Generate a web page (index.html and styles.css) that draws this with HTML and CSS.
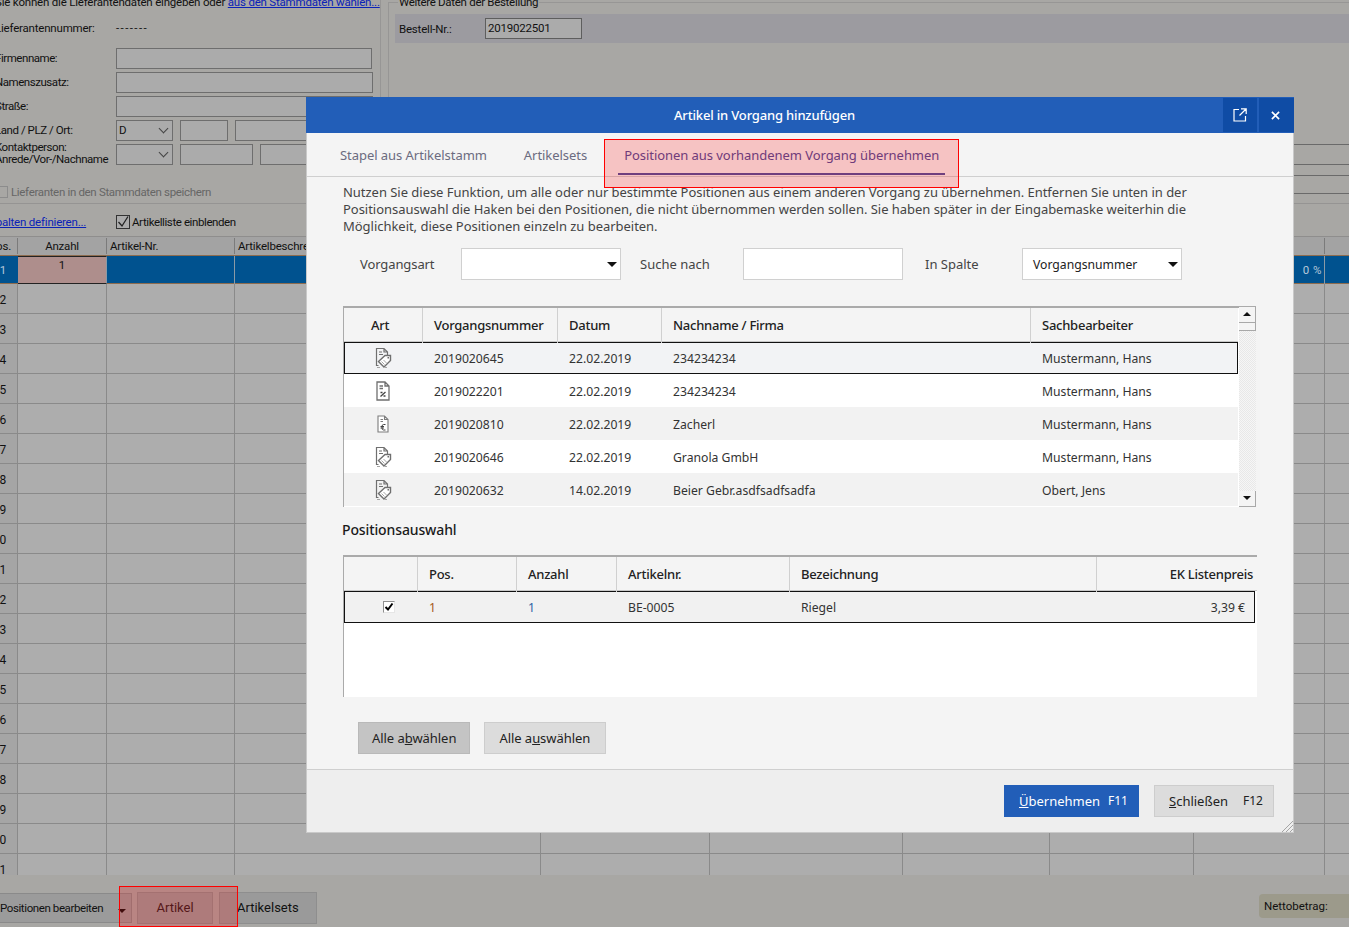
FILE: index.html
```html
<!DOCTYPE html>
<html lang="de">
	<head>
		<meta charset="UTF-8" />
		<title>Artikel in Vorgang hinzufügen</title>
		<link rel="stylesheet" href="styles.css">
	</head>
	<body>
		<svg class="defs" width="0" height="0">
			<symbol id="doc-tag" viewBox="0 0 18 22">
				<path d="M4.500 18.500H2.500V1.500H10L13.500 5V8M10 1.500V5H13.500M5 5H8M5 7.500H9" fill="none" stroke="#6f6f6f" stroke-width="1.200" />
				<path d="M4.500 14.500L11 8.500H16.500V13.500L10 20Z" fill="#fff" stroke="#6f6f6f" stroke-width="1.400" />
				<path d="M7.500 14.500L10.500 17.500M9.500 13L12.500 16" stroke="#a8a8a8" />
				<rect x="13.500" y="10" width="1.500" height="1.500" fill="#6f6f6f" />
				<path d="M3 20.500H6M11 20.500H13" stroke="#a5a5a5" />
			</symbol>
			<symbol id="doc-percent" viewBox="0 0 18 22">
				<path d="M3 2H11L15 6V20H3ZM11 2V6H15M5.500 6H9M5.500 8.500H9" fill="#fff" stroke="#6f6f6f" stroke-width="1.300" />
				<path d="M6.500 16.500L11.500 12M6.500 12.500H8.500M9.500 16H11.500" stroke="#444" stroke-width="1.300" />
			</symbol>
			<symbol id="doc-euro" viewBox="0 0 18 22">
				<path d="M4 3H10.500L14 6.500V19H4ZM10.500 3V6.500H14M6.500 6.500H9M6.500 8.500H9" fill="#fff" stroke="#7d7d7d" stroke-width="1.100" />
				<path d="M11.500 11.500H9.500Q8 11.500 8 13.500V15Q8 17 9.500 17H11.500M6.500 13.500H10M6.500 15H10" fill="none" stroke="#444" />
			</symbol>
		</svg>

		<div class="app">
			<div class="top">
				<div class="supplier">
					<p class="intro">Sie können die Lieferantendaten eingeben oder <a href="#">aus den Stammdaten wählen...</a></p>
					<div class="number-row"><span class="lbl">Lieferantennummer:</span><span class="dashes">-------</span></div>
					<div class="frow"><span class="lbl">Firmenname:</span><span class="box w-256"></span></div>
					<div class="frow"><span class="lbl">Namenszusatz:</span><span class="box w-257"></span></div>
					<div class="frow"><span class="lbl">Straße:</span><span class="box w-257"></span></div>
					<div class="frow"><span class="lbl">Land / PLZ / Ort:</span><span class="box combo w-57">D</span><span class="box w-48"></span><span class="box w-137"></span></div>
					<div class="frow"><span class="lbl two-line">Kontaktperson:<br />Anrede/Vor-/Nachname</span><span class="box combo w-57"></span><span class="box w-73"></span><span class="box w-112"></span></div>
					<div class="save-row"><span class="mini-check"></span>Lieferanten in den Stammdaten speichern</div>
				</div>
				<div class="order">
					<div class="legend">Weitere Daten der Bestellung</div>
					<div class="band"><span class="band-lbl">Bestell-Nr.:</span><span class="order-no">2019022501</span></div>
					<div class="hline h-102"></div>
					<div class="hline h-20"></div>
					<div class="hline h-11"></div>
					<div class="hline h-18"></div>
				</div>
			</div>

			<div class="list-tools">
				<a href="#">Spalten definieren...</a>
				<span class="tool-check"><svg width="14" height="14" viewBox="0 0 14 14"><path d="M2.500 7L6 11L12 1.500" fill="none" stroke="#222" stroke-width="1.300" /></svg></span>
				<span class="tool-lbl">Artikelliste einblenden</span>
			</div>

			<div class="grid">
				<div class="grid-cols grid-head">
					<span class="pos-head">Pos.</span><span class="center">Anzahl</span><span>Artikel-Nr.</span><span>Artikelbeschreibung</span><span></span><span></span><span></span><span></span><span></span>
				</div>
				<div class="grid-cols grid-sel">
					<span class="pos">1</span><span class="amount">1</span><span></span><span></span><span></span><span></span><span></span><span></span><span class="pct">0 %</span>
				</div>
				<div class="rows">
					<div class="row"><span class="pos">2</span></div>
					<div class="row"><span class="pos">3</span></div>
					<div class="row"><span class="pos">4</span></div>
					<div class="row"><span class="pos">5</span></div>
					<div class="row"><span class="pos">6</span></div>
					<div class="row"><span class="pos">7</span></div>
					<div class="row"><span class="pos">8</span></div>
					<div class="row"><span class="pos">9</span></div>
					<div class="row"><span class="pos">10</span></div>
					<div class="row"><span class="pos">11</span></div>
					<div class="row"><span class="pos">12</span></div>
					<div class="row"><span class="pos">13</span></div>
					<div class="row"><span class="pos">14</span></div>
					<div class="row"><span class="pos">15</span></div>
					<div class="row"><span class="pos">16</span></div>
					<div class="row"><span class="pos">17</span></div>
					<div class="row"><span class="pos">18</span></div>
					<div class="row"><span class="pos">19</span></div>
					<div class="row"><span class="pos">20</span></div>
					<div class="row"><span class="pos">21</span></div>
				</div>
			</div>

			<div class="toolbar">
				<span class="tb-split">Positionen bearbeiten<i class="tb-arrow"></i></span>
				<span class="tb-btn tb-artikel">Artikel</span>
				<span class="tb-btn tb-sets">Artikelsets</span>
				<span class="netto">Nettobetrag:</span>
			</div>
		</div>

		<div class="hl hl-bottom"></div>

		<div class="modal">
			<div class="modal-title">
				<span class="modal-caption">Artikel in Vorgang hinzufügen</span>
				<span class="title-btn popout"><svg width="14" height="14" viewBox="0 0 14 14"><path d="M6 1.500H1V13H12.500V8M8 .800H13.200V6M13 1L6.500 7.500" fill="none" stroke="#fff" stroke-width="1.200" /></svg></span>
				<span class="title-btn close"><svg width="9" height="9" viewBox="0 0 10 10"><path d="M1 1L9 9M9 1L1 9" stroke="#fff" stroke-width="1.800" /></svg></span>
			</div>

			<div class="tabs">
				<span class="tab">Stapel aus Artikelstamm</span>
				<span class="tab">Artikelsets</span>
				<span class="tab active">Positionen aus vorhandenem Vorgang übernehmen</span>
			</div>
			<div class="hl hl-tab"></div>

			<div class="modal-body">
				<p class="desc">Nutzen Sie diese Funktion, um alle oder nur bestimmte Positionen aus einem anderen Vorgang zu übernehmen. Entfernen Sie unten in der Positionsauswahl die Haken bei den Positionen, die nicht übernommen werden sollen. Sie haben später in der Eingabemaske weiterhin die Möglichkeit, diese Positionen einzeln zu bearbeiten.</p>

				<div class="filter">
					<span class="f-art">Vorgangsart</span>
					<span class="field select"></span>
					<span class="f-such">Suche nach</span>
					<span class="field"></span>
					<span class="f-spalte">In Spalte</span>
					<span class="field select">Vorgangsnummer</span>
				</div>

				<div class="table table-a">
					<div class="t-main">
						<div class="t-row t-head cols-a">
							<span class="center art">Art</span><span>Vorgangsnummer</span><span>Datum</span><span>Nachname / Firma</span><span>Sachbearbeiter</span>
						</div>
						<div class="t-row cols-a selected">
							<span class="center ic"><svg width="18" height="22"><use href="#doc-tag" /></svg></span><span>2019020645</span><span>22.02.2019</span><span>234234234</span><span>Mustermann, Hans</span>
						</div>
						<div class="t-row cols-a">
							<span class="center ic"><svg width="18" height="22"><use href="#doc-percent" /></svg></span><span>2019022201</span><span>22.02.2019</span><span>234234234</span><span>Mustermann, Hans</span>
						</div>
						<div class="t-row cols-a alt">
							<span class="center ic"><svg width="18" height="22"><use href="#doc-euro" /></svg></span><span>2019020810</span><span>22.02.2019</span><span>Zacherl</span><span>Mustermann, Hans</span>
						</div>
						<div class="t-row cols-a">
							<span class="center ic"><svg width="18" height="22"><use href="#doc-tag" /></svg></span><span>2019020646</span><span>22.02.2019</span><span>Granola GmbH</span><span>Mustermann, Hans</span>
						</div>
						<div class="t-row cols-a alt">
							<span class="center ic"><svg width="18" height="22"><use href="#doc-tag" /></svg></span><span>2019020632</span><span>14.02.2019</span><span>Beier Gebr.asdfsadfsadfa</span><span>Obert, Jens</span>
						</div>
					</div>
					<div class="scroll">
						<span class="sb-btn"><i class="up"></i></span>
						<span class="sb-thumb"></span>
						<span class="sb-track"></span>
						<span class="sb-btn"><i class="down"></i></span>
					</div>
				</div>

				<h2 class="subhead">Positionsauswahl</h2>

				<div class="table table-b">
					<div class="t-main">
						<div class="t-row t-head cols-b">
							<span></span><span>Pos.</span><span>Anzahl</span><span>Artikelnr.</span><span>Bezeichnung</span><span class="right head-price">EK Listenpreis</span>
						</div>
						<div class="t-row cols-b selected">
							<span class="center"><span class="check"><svg width="10" height="10" viewBox="0 0 10 10"><path d="M1.500 5L4 7.500L8.500 1.500" fill="none" stroke="#000" stroke-width="2" /></svg></span></span><span class="val-pos">1</span><span class="val-qty">1</span><span>BE-0005</span><span>Riegel</span><span class="right price">3,39 €</span>
						</div>
					</div>
				</div>

				<div class="select-btns">
					<span class="btn btn-pressed">Alle a<u>b</u>wählen</span>
					<span class="btn btn-wide">Alle a<u>u</u>swählen</span>
				</div>
			</div>

			<div class="modal-foot">
				<span class="btn-foot primary"><span><u>Ü</u>bernehmen</span><span class="key">F11</span></span>
				<span class="btn-foot"><span><u>S</u>chließen</span><span class="key">F12</span></span>
				<svg class="grip" width="11" height="11" viewBox="0 0 11 11"><path d="M0 11L11 0M4 11L11 4M8 11L11 8" stroke="#a5a5a5" /></svg>
			</div>
		</div>
	</body>
</html>
```

FILE: styles.css
```css
html,
body {
	margin: 0;
	padding: 0;
	height: 927px;
	overflow: hidden;
}
body {
	position: relative;
	background: #a8a7a4;
	font-family: "Noto Sans", Arial, sans-serif;
	font-size: 13px;
	color: #222;
}
.defs {
	position: absolute;
}
p,
h2 {
	margin: 0;
}

/* the window behind the dialog is scrolled a bit, left and top are cut */
.app {
	display: flex;
	flex-direction: column;
	width: 1370px;
	height: 935px;
	margin: -8px 0 0 -21px;
	font-family: Roboto, Arial, sans-serif;
	font-size: 11.500px;
	letter-spacing: -.2px;
	color: #111;
}
.top {
	display: flex;
	height: 212px;
	box-sizing: border-box;
	border-bottom: 1px solid #959493;
}
.supplier {
	width: 402px;
	flex: none;
	padding-left: 16px;
	box-sizing: border-box;
	border-right: 1px solid #979695;
}
.intro {
	height: 22px;
	line-height: 20px;
	white-space: nowrap;
}
a {
	color: #0a22b8;
}
.number-row {
	display: flex;
	height: 25px;
	margin-top: 3px;
	margin-bottom: 6px;
	line-height: 22px;
}
.lbl {
	width: 121px;
	flex: none;
	white-space: nowrap;
}
.dashes {
	letter-spacing: 1.400px;
}
.frow {
	display: flex;
	gap: 7px;
	height: 21px;
	margin-bottom: 3px;
	line-height: 21px;
}
.frow .lbl {
	margin-right: -7px;
	letter-spacing: -.45px;
}
.frow .two-line {
	margin-top: -5px;
	line-height: 12px;
	padding-top: 2px;
}
.box {
	box-sizing: border-box;
	height: 21px;
	border: 1px solid #6e6e6e;
	background: #ababab;
	line-height: 18px;
	padding-left: 2px;
}
.w-256 { width: 256px; }
.w-257 { width: 257px; }
.w-57 { width: 57px; }
.w-48 { width: 48px; }
.w-73 { width: 73px; }
.w-137 { width: 137px; }
.w-112 { width: 112px; }
.combo {
	position: relative;
}
.combo:after {
	content: '';
	position: absolute;
	right: 5px;
	top: 4px;
	width: 6px;
	height: 6px;
	border-right: 1px solid #444;
	border-bottom: 1px solid #444;
	transform: rotate(45deg);
}
.save-row {
	display: flex;
	align-items: center;
	gap: 3px;
	margin-top: 20px;
	height: 14px;
	letter-spacing: -.33px;
	color: #666;
}
.mini-check {
	width: 12px;
	height: 12px;
	margin-left: 1px;
	border: 1px solid #8c8c8c;
	box-sizing: border-box;
}
.order {
	flex: 1;
	margin-left: 7px;
	padding-left: 6px;
	border-left: 1px solid #979695;
	border-top: 1px solid #979695;
	margin-top: 10px;
	position: relative;
}
.legend {
	position: absolute;
	left: 9px;
	top: -8px;
	background: #a8a7a4;
	padding: 0 1px;
	line-height: 14px;
	letter-spacing: -.3px;
}
.band {
	display: flex;
	align-items: center;
	height: 29px;
	margin-top: 11px;
	background: #9c9ba0;
	padding-left: 4px;
}
.band-lbl {
	width: 86px;
}
.order-no {
	width: 97px;
	height: 21px;
	box-sizing: border-box;
	border: 1px solid #5e5e5e;
	background: #ababab;
	padding-left: 2px;
	line-height: 18px;
}
.hline {
	border-bottom: 1px solid #6a6a6a;
}
.h-102 { height: 101px; }
.h-20 { height: 19px; }
.h-11 { height: 10px; }
.h-18 { height: 17px; }

.list-tools {
	display: flex;
	align-items: center;
	height: 32px;
	box-sizing: border-box;
	padding: 4px 0 0 10px;
}
.list-tools a {
	width: 127px;
	flex: none;
}
.tool-check {
	display: block;
	box-sizing: border-box;
	width: 14px;
	height: 14px;
	margin-right: 2px;
	border: 1px solid #333;
	background: #ababab;
}
.tool-check svg {
	display: block;
	margin: -1px;
}
.tool-lbl {
	letter-spacing: -.4px;
}

.grid {
	height: 638px;
	overflow: hidden;
	border-top: 1px solid #8f8e8d;
	background: #adadad;
}
.grid-cols {
	display: grid;
	grid-template-columns: 39px 89px 128px 306px 169px 193px 147px 144px 131px 24px;
}
.grid-head {
	height: 18px;
	line-height: 18px;
	background: #a3a3a3;
}
.grid-head > span {
	margin: 1px 0;
	padding-left: 3px;
	border-right: 1px solid #7b7b7b;
	overflow: hidden;
	white-space: nowrap;
	line-height: 16px;
}
.grid-head > .pos-head {
	text-align: right;
	padding-right: 6px;
}
.grid-head > .center {
	padding-left: 0;
}
.center {
	text-align: center;
}
.grid-sel {
	height: 29px;
	box-sizing: border-box;
	background: #00528f;
	border-top: 1px solid #8d6c4f;
	border-bottom: 1px solid #8d6c4f;
	color: #b7c9da;
}
.grid-sel > span {
	border-right: 1px solid #8a9aa6;
}
.grid-sel > span:first-child {
	border-right: 0;
}
.grid-sel .amount {
	background: #ae8e8c;
	border-top: 1px solid #222;
	border-bottom: 1px solid #222;
	text-align: center;
	color: #111;
	line-height: 16px;
}
.grid-sel .pos {
	line-height: 28px;
}
.pct {
	text-align: right;
	padding-right: 2px;
	line-height: 28px;
	letter-spacing: .5px;
}
.pos {
	display: block;
	width: 38px;
	box-sizing: border-box;
	padding-right: 11px;
	text-align: right;
}
.rows {
	background-color: #adadad;
	background-image:
		linear-gradient(#a5a5a5, #a5a5a5),
		linear-gradient(#8a8a8a, #8a8a8a),
		linear-gradient(#8a8a8a, #8a8a8a),
		linear-gradient(#8a8a8a, #8a8a8a),
		linear-gradient(#8a8a8a, #8a8a8a),
		linear-gradient(#8a8a8a, #8a8a8a),
		linear-gradient(#8a8a8a, #8a8a8a),
		linear-gradient(#8a8a8a, #8a8a8a),
		linear-gradient(#8a8a8a, #8a8a8a),
		linear-gradient(#8a8a8a, #8a8a8a);
	background-repeat: no-repeat;
	background-size: 38px 100%, 1px 100%, 1px 100%, 1px 100%, 1px 100%, 1px 100%, 1px 100%, 1px 100%, 1px 100%, 1px 100%;
	background-position: 0 0, 38px 0, 127px 0, 255px 0, 561px 0, 730px 0, 923px 0, 1070px 0, 1214px 0, 1345px 0;
}
.row {
	height: 30px;
	box-sizing: border-box;
	padding-top: 3px;
	border-bottom: 1px solid #8a8a8a;
	line-height: 26px;
	font-size: 12px;
}

.toolbar {
	display: flex;
	align-items: flex-start;
	flex: 1;
	padding-top: 17px;
	font-size: 13px;
	letter-spacing: 0;
}
.tb-split {
	position: relative;
	width: 153px;
	height: 30px;
	flex: none;
	box-sizing: border-box;
	margin: 1px 5px 0 0;
	padding-left: 20px;
	background: #9b9b9b;
	border: 1px solid #8a8a8a;
	line-height: 28px;
	font-size: 11.500px;
	letter-spacing: -.4px;
	white-space: nowrap;
}
.tb-arrow {
	position: absolute;
	right: 5px;
	top: 15px;
	border: 4px solid transparent;
	border-top: 4px solid #111;
	border-bottom: 0;
}
.tb-btn {
	height: 32px;
	box-sizing: border-box;
	background: #9a9a9a;
	border: 1px solid #8e8e8e;
	line-height: 30px;
	text-align: center;
	flex: none;
}
.tb-artikel {
	width: 76px;
	margin-right: 6px;
	color: #2a2022;
}
.tb-sets {
	width: 98px;
	padding-left: 17px;
	box-sizing: border-box;
	text-align: left;
}
.netto {
	margin: 2px 0 0 auto;
	width: 90px;
	height: 24px;
	padding-left: 5px;
	box-sizing: border-box;
	background: #9c9a8b;
	border-radius: 4px 0 0 4px;
	line-height: 24px;
	font-size: 11.500px;
}

/* red marks lying over the screenshot */
.hl {
	position: absolute;
	box-sizing: border-box;
	border: 1px solid #f00;
	background: rgba(255, 0, 0, .2);
	z-index: 5;
}
.hl-bottom {
	left: 119px;
	top: 886px;
	width: 119px;
	height: 41px;
}
.hl-tab {
	left: 297px;
	top: 42px;
	width: 355px;
	height: 49px;
}

.modal {
	position: absolute;
	left: 306px;
	top: 97px;
	width: 988px;
	height: 736px;
	box-sizing: border-box;
	display: flex;
	flex-direction: column;
	background: #f4f4f4;
	border-right: 1px solid #c9c9c9;
	border-bottom: 1px solid #c9c9c9;
	border-left: 1px solid #c9c9c9;
}
.modal-title {
	display: flex;
	height: 36px;
	margin: 0 -1px 0 -1px;
	background: #225eb8;
	color: #fff;
}
.modal-caption {
	flex: 1;
	text-align: center;
	font-weight: 500;
	line-height: 37px;
	letter-spacing: -.17px;
}
.title-btn {
	display: flex;
	align-items: center;
	justify-content: center;
	width: 34px;
	height: 34px;
	margin-top: 1px;
	background: #0f4ca5;
}
.popout {
	box-sizing: border-box;
	padding-right: 1px;
}
.close {
	box-sizing: border-box;
	width: 35px;
	margin-left: 2px;
	padding-right: 2px;
}

.tabs {
	display: flex;
	height: 44px;
	box-sizing: border-box;
	padding-left: 33px;
	border-bottom: 1px solid #cfcfcf;
	gap: 37px;
	color: #6b6b80;
	line-height: 45px;
	letter-spacing: -.05px;
}
.tab.active {
	position: relative;
	color: #4b4b99;
}
.tab.active:after {
	content: '';
	position: absolute;
	left: -6px;
	right: -6px;
	top: 40px;
	height: 2px;
	background: #4c4f9e;
}

.modal-body {
	flex: 1;
	padding: 7px 37px 0 36px;
}
.desc {
	height: 51px;
	line-height: 17px;
	letter-spacing: -.03px;
	color: #444;
}
.filter {
	display: flex;
	align-items: center;
	margin-top: 13px;
	color: #444;
}
.field {
	display: block;
	position: relative;
	width: 160px;
	height: 32px;
	box-sizing: border-box;
	padding-left: 10px;
	background: #fff;
	border: 1px solid #d0d0d0;
	line-height: 31px;
	font-size: 12.200px;
	color: #222;
}
.select:after {
	content: '';
	position: absolute;
	right: 3px;
	top: 13px;
	border: 5px solid transparent;
	border-top: 5px solid #111;
	border-bottom: 0;
}
.f-art {
	width: 118px;
	padding-left: 17px;
	box-sizing: border-box;
	letter-spacing: -.1px;
}
.f-such {
	width: 122px;
	padding-left: 19px;
	box-sizing: border-box;
}
.f-spalte {
	width: 119px;
	padding-left: 22px;
	box-sizing: border-box;
}

.table {
	display: flex;
	background: #fff;
	border-top: 2px solid #aaa;
	border-left: 1px solid #aaa;
	box-sizing: border-box;
}
.table-a {
	width: 913px;
	height: 201px;
	margin-top: 26px;
}
.table-b {
	width: 914px;
	height: 142px;
}
.t-main {
	flex: 1;
	min-width: 0;
}
.table-a .t-main {
	padding-right: 1px;
}
.t-row {
	display: grid;
	height: 33px;
	padding-top: 1px;
	align-items: center;
	box-sizing: border-box;
	font-size: 12.200px;
	color: #333;
}
.t-row > span {
	padding-left: 11px;
	white-space: nowrap;
}
.t-row > .center {
	padding: 0;
}
.t-row > .ic {
	display: flex;
	justify-content: center;
	padding-right: 2px;
}
.t-row > .right {
	padding: 0 11px 0 0;
	text-align: right;
}
.cols-a {
	grid-template-columns: 79px 135px 104px 369px 207px;
}
.cols-b {
	grid-template-columns: 74px 99px 100px 173px 307px 159px;
}
.t-head {
	height: 34px;
	padding-top: 0;
	background: #f4f4f4;
	align-items: stretch;
	border-bottom: 1px solid #c8c8c8;
	font-size: 13px;
	font-weight: 500;
	letter-spacing: -.25px;
	color: #222;
}
.t-head > span {
	border-right: 1px solid #d0d0d0;
	line-height: 35px;
}
.t-head > span:last-child {
	border-right: 0;
}
.t-head > .art {
	padding-right: 6px;
}
.t-row > .head-price {
	padding-right: 3px;
}
.t-row > .price {
	padding-right: 9px;
}
.alt {
	background: #f2f2f2;
}
.selected {
	height: 32px;
	padding-top: 0;
	background: #f2f3f5;
	border: 1px solid #111;
}
.cols-a.selected {
	grid-template-columns: 78px 135px 104px 369px 206px;
}
.cols-b.selected {
	grid-template-columns: 73px 99px 100px 173px 307px 157px;
	margin-right: 2px;
	background: #f1f1f1;
}
.t-row svg {
	display: block;
}
.scroll {
	display: flex;
	flex-direction: column;
	width: 17px;
	box-sizing: border-box;
	margin-top: -1px;
	flex: none;
}
.sb-btn {
	position: relative;
	display: block;
	height: 16px;
	box-sizing: border-box;
	background: #f4f4f4;
	border-bottom: 1px solid #a8a8a8;
	border-right: 1px solid #a8a8a8;
}
.sb-thumb {
	height: 8px;
	box-sizing: border-box;
	background: #f4f4f4;
	border-bottom: 1px solid #a8a8a8;
	border-right: 1px solid #a8a8a8;
}
.sb-track {
	flex: 1;
	background: repeating-conic-gradient(#f6f6f6 0 25%, #e8e8e8 0 50%) 0 0 / 2px 2px;
}
.sb-btn i {
	position: absolute;
	left: 4px;
	top: 5px;
	border: 4px solid transparent;
}
.sb-btn .up {
	border-top: 0;
	border-bottom: 4px solid #111;
}
.sb-btn .down {
	border-bottom: 0;
	border-top: 4px solid #111;
}

.subhead {
	height: 20px;
	margin: 13px 0 15px -1px;
	font-size: 14px;
	font-weight: 500;
	line-height: 20px;
	letter-spacing: -.12px;
	color: #1a1a1a;
}
.check {
	display: inline-flex;
	align-items: center;
	justify-content: center;
	width: 12px;
	height: 12px;
	box-sizing: border-box;
	margin: 2px 0 0 14px;
	background: #fff;
	border: 1px solid #8f8f8f;
	border-right-color: #e6e6e6;
	border-bottom-color: #e6e6e6;
}
.val-pos {
	color: #a55a20;
}
.val-qty {
	color: #2f64a5;
}

.select-btns {
	display: flex;
	gap: 14px;
	margin: 25px 0 0 15px;
}
.btn {
	height: 32px;
	padding: 0 13px;
	box-sizing: border-box;
	background: #dcdcdc;
	border: 1px solid #cdcdcd;
	line-height: 30px;
	letter-spacing: -.05px;
	color: #222;
}
.btn-wide {
	padding: 0 15px 0 14px;
}
.btn-pressed {
	background: #c4c4c4;
	border-color: #b9b9b9;
}

.modal-foot {
	position: relative;
	display: flex;
	justify-content: flex-end;
	gap: 15px;
	height: 63px;
	box-sizing: border-box;
	padding: 15px 19px 0 0;
	background: #eeeeee;
	border-top: 1px solid #cfcfcf;
}
.btn-foot {
	display: flex;
	justify-content: space-between;
	width: 120px;
	height: 32px;
	padding: 0 10px 0 14px;
	box-sizing: border-box;
	background: #dcdcdc;
	border: 1px solid #cdcdcd;
	line-height: 30px;
}
.primary {
	width: 135px;
	background: #225eb8;
	border-color: #225eb8;
	color: #fff;
}
.key {
	font-size: 12px;
}
.grip {
	position: absolute;
	right: 0;
	bottom: 0;
}
```
